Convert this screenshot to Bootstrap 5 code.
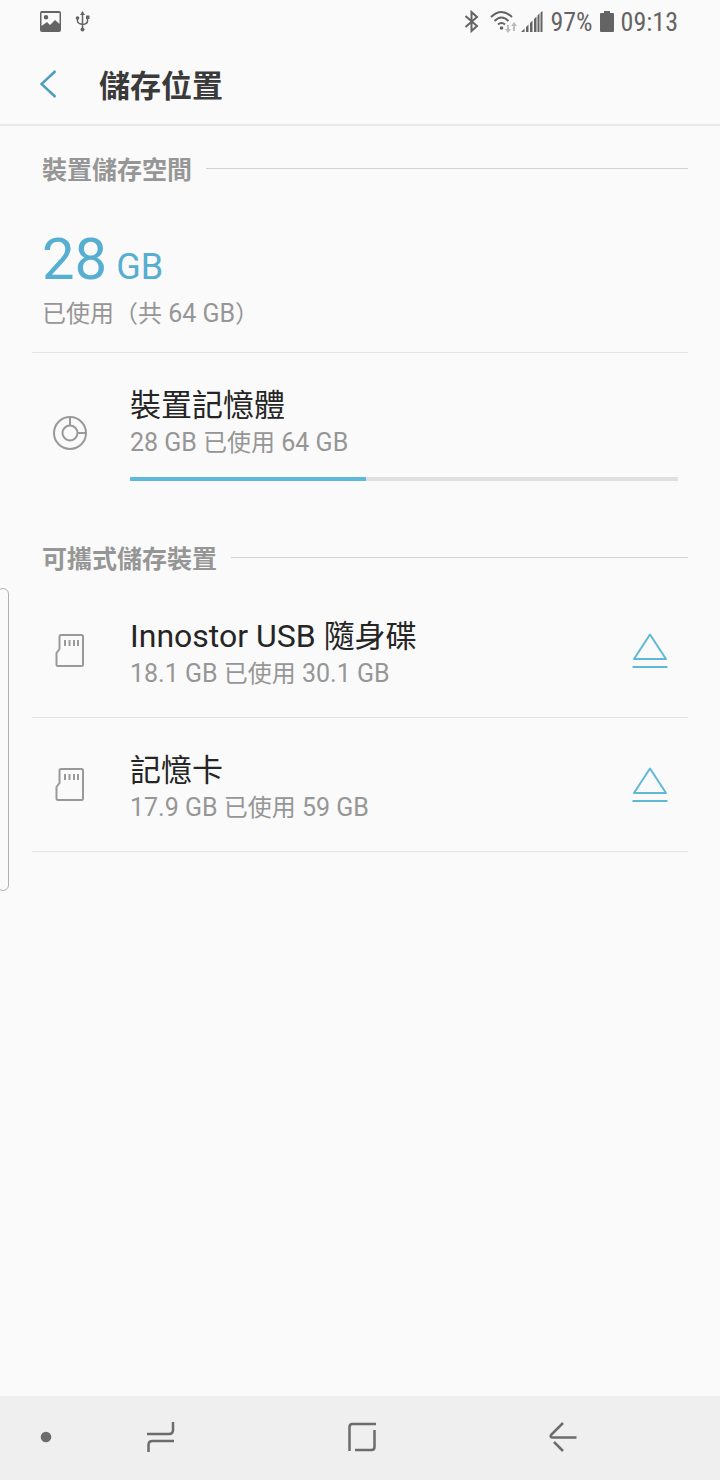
<!DOCTYPE html>
<html lang="zh-TW">
<head>
<meta charset="utf-8">
<meta name="viewport" content="width=device-width, initial-scale=1">
<title>儲存位置</title>
<link href="https://cdn.jsdelivr.net/npm/bootstrap@5.3.0/dist/css/bootstrap.min.css" rel="stylesheet">
<style>
  body { background: #fafafa; color: #252525; font-family: Roboto, "Noto Sans CJK TC", sans-serif; }
  svg { display: block; flex: none; }
  .icon-stroke { fill: none; stroke: currentColor; stroke-width: 2; }
  .icon-heavy { stroke-width: 2.500; }
  .status-bar { height: 43px; padding: 0 42px 0 40px; color: #646464; font: 26px/42px "Roboto Condensed", "Liberation Sans Narrow", Roboto, sans-serif; }
  .status-left { gap: 14px; }
  .status-right { gap: 7px; }
  .signal-group { gap: 4px; }
  .app-header { height: 83px; padding: 0 40px; border-bottom: 2px solid #e8e8e8; }
  .app-header h1 { font-size: 31px; line-height: 40px; padding-top: 6px; color: #3a3a3a; }
  .back-btn { color: #4b9fbe; width: 59px; }
  .storage-area { padding: 27px 32px 0; }
  .section-title { padding-left: 10px; gap: 14px; }
  .section-title h2 { font-size: 25px; line-height: 36px; color: #969696; }
  .section-title .rule { height: 1px; margin-top: 15px; background: #d2d2d2; }
  .usage { padding: 37px 10px 20px; color: #56aed0; border-bottom: 1px solid #e4e4e4; }
  .usage-total { font-size: 58px; line-height: 67px; margin-bottom: 3px; }
  .usage-total small { font-size: 36px; line-height: 1; }
  .sub-text { font-size: 25px; line-height: 36px; color: #969696; }
  .sub-text span { font-size: 24px; line-height: 1; }
  .storage-item { padding: 25px 20px; gap: 42px; border-bottom: 1px solid #e4e4e4; color: #999; }
  .storage-item .details { padding-top: 8px; }
  .storage-item.internal { padding: 25px 10px 31px 20px; border: 0; }
  .storage-item.internal svg { margin-top: 6px; }
  .storage-item h3 { font-size: 32px; line-height: 39px; color: #252525; }
  .storage-item h3 span { font-size: 31px; line-height: 1; }
  .storage-bar { height: 4px; margin-top: 16px; background: #e0e0e0; --bs-progress-bar-bg: #5fb9dc; }
  .portable { margin-top: 30px; }
  .portable .storage-list { margin-top: 6px; }
  .eject-btn { color: #5fb9d6; }
  .edge-handle { left: -3px; top: 588px; width: 12px; height: 303px; border: 1px solid #b0b0b0; border-radius: 8px; }
  .nav-bar { height: 84px; background: #efefef; color: #6c6c6c; padding: 0 57px 2px 0; }
  .nav-dot { width: 60px; }
  .nav-dot svg { margin-left: 32px; }
</style>
</head>
<body>
<div class="d-flex flex-column min-vh-100 position-relative">
  <div class="status-bar d-flex align-items-center justify-content-between">
    <div class="status-left d-flex align-items-center">
      <svg width="21" height="21" viewBox="0 0 21 21" role="img" aria-label="圖片"><path fill="currentColor" fill-rule="evenodd" d="M2 0h17q2 0 2 2v17q0 2-2 2H2q-2 0-2-2V2Q0 0 2 0ZM1.500 2v13L7 11l3 3 5-5 4.500 4V2ZM6 4a2 2 0 1 1 0 4.500a2 2 0 1 1 0-4.500Z"/></svg>
      <svg width="16" height="21" viewBox="0 0 16 21" role="img" aria-label="USB"><path class="icon-stroke" style="stroke-width:1.500" d="M7.500 2v17M2.500 7v3q0 2.500 5 3.500q5-.5 5-3.500V6"/><path fill="currentColor" d="M7.500 0 10 4H5ZM11 4.500h3.500V8H11Z"/><circle cx="2.500" cy="7" r="1.800" fill="currentColor"/><circle cx="7.500" cy="18.500" r="2" fill="currentColor"/></svg>
    </div>
    <div class="status-right d-flex align-items-center">
      <svg class="me-1" width="15" height="23" viewBox="0 0 15 23" role="img" aria-label="藍牙"><path class="icon-stroke" d="M1.500 6 13 16l-5.500 5V2L13 7 1.500 17"/></svg>
      <div class="signal-group d-flex align-items-center">
        <svg width="27" height="24" viewBox="0 0 27 24" role="img" aria-label="Wi-Fi"><path class="icon-stroke" d="M1 7q10.500-10 21 0M4.500 11q7-7 14 0M8 14.500q3.500-3 7 0"/><circle cx="11.500" cy="18" r="1.800" fill="currentColor"/><path fill="#bdbdbd" d="M17 15h2v4h2l-3 4-3-4h2ZM24 12l3 4h-2v5h-2v-5h-2Z"/></svg>
        <svg width="22" height="22" viewBox="0 0 22 22" role="img" aria-label="訊號"><path fill="currentColor" d="M0 21l3.500-3.500V21ZM5 16l2.500-2.500V21H5ZM9 12l2.500-2.500V21H9ZM13 8l2.500-2.500V21H13ZM16.500 4.500 18.500 2.500V21h-2ZM19.500 1.500 21.500 0v21h-2Z"/></svg>
      </div>
      <span>97%</span>
      <svg width="14" height="21" viewBox="0 0 14 21" role="img" aria-label="電池"><path fill="currentColor" d="M4 0h6v2h3q1 0 1 1v17q0 1-1 1H1q-1 0-1-1V3q0-1 1-1h3Z"/></svg>
      <span>09:13</span>
    </div>
  </div>

  <header class="app-header d-flex align-items-center">
    <button type="button" class="back-btn btn border-0 p-0" aria-label="返回"><svg width="17" height="28" viewBox="0 0 17 28"><path class="icon-stroke icon-heavy" d="M15.500 1 1.500 14l14 13"/></svg></button>
    <h1 class="fw-bold m-0">儲存位置</h1>
  </header>

  <main class="storage-area flex-grow-1">
    <section>
      <div class="section-title d-flex align-items-start"><h2 class="fw-bold m-0">裝置儲存空間</h2><div class="rule flex-grow-1"></div></div>
      <div class="usage">
        <div class="usage-total">28<small> GB</small></div>
        <div class="sub-text"><span>已使用（共</span> 64 GB<span>）</span></div>
      </div>
      <div class="storage-item internal d-flex align-items-center">
        <svg width="36" height="36" viewBox="0 0 36 36"><g class="icon-stroke"><circle cx="18" cy="18" r="16"/><circle cx="18" cy="18" r="7.500"/><path d="M18 2v8.500M25.500 18H34"/></g></svg>
        <div class="details flex-grow-1">
          <h3 class="fw-normal m-0"><span>裝置記憶體</span></h3>
          <div class="sub-text">28 GB <span>已使用</span> 64 GB</div>
          <div class="storage-bar progress rounded-0" role="progressbar" aria-label="裝置記憶體" aria-valuenow="43" aria-valuemin="0" aria-valuemax="100"><div class="progress-bar" style="width:43%"></div></div>
        </div>
      </div>
    </section>

    <section class="portable">
      <div class="section-title d-flex align-items-start"><h2 class="fw-bold m-0">可攜式儲存裝置</h2><div class="rule flex-grow-1"></div></div>
      <div class="storage-list">
        <div class="storage-item d-flex align-items-center">
          <svg width="36" height="36" viewBox="0 0 36 36"><path class="icon-stroke" d="M9 2h20.500q1.500 0 1.500 1.500v28q0 1.500-1.500 1.500H6q-1.500 0-1.500-1.500V20l3-4V3.500Q7.500 2 9 2ZM13 7v6M17.500 7v6M22 7v6M26 7v6"/></svg>
          <div class="details flex-grow-1"><h3 class="fw-normal m-0">Innostor USB <span>隨身碟</span></h3><div class="sub-text">18.1 GB <span>已使用</span> 30.1 GB</div></div>
          <button type="button" class="eject-btn btn border-0 p-0" aria-label="卸載 Innostor USB 隨身碟"><svg width="36" height="36" viewBox="0 0 36 36"><path class="icon-stroke" stroke-linejoin="round" d="M18 1.500 34 26H2ZM.5 34h35"/></svg></button>
        </div>
        <div class="storage-item d-flex align-items-center">
          <svg width="36" height="36" viewBox="0 0 36 36"><path class="icon-stroke" d="M9 2h20.500q1.500 0 1.500 1.500v28q0 1.500-1.500 1.500H6q-1.500 0-1.500-1.500V20l3-4V3.500Q7.500 2 9 2ZM13 7v6M17.500 7v6M22 7v6M26 7v6"/></svg>
          <div class="details flex-grow-1"><h3 class="fw-normal m-0"><span>記憶卡</span></h3><div class="sub-text">17.9 GB <span>已使用</span> 59 GB</div></div>
          <button type="button" class="eject-btn btn border-0 p-0" aria-label="卸載記憶卡"><svg width="36" height="36" viewBox="0 0 36 36"><path class="icon-stroke" stroke-linejoin="round" d="M18 1.500 34 26H2ZM.5 34h35"/></svg></button>
        </div>
      </div>
    </section>
  </main>

  <nav class="nav-bar d-flex align-items-center" aria-label="導覽列">
    <button type="button" class="nav-dot btn border-0 p-0 text-reset d-flex justify-content-center" aria-label="隱藏導覽列"><svg width="12" height="12" viewBox="0 0 12 12"><circle cx="6" cy="6" r="5.300" fill="currentColor"/></svg></button>
    <div class="row g-0 flex-grow-1">
      <button type="button" class="col btn border-0 p-0 text-reset d-flex justify-content-center" aria-label="最近使用"><svg width="28" height="32" viewBox="0 0 28 32"><path class="icon-stroke icon-heavy" d="M0 13h22q4 0 4-4V1M1.500 31v-7q0-4 4-4H27"/></svg></button>
      <button type="button" class="col btn border-0 p-0 text-reset d-flex justify-content-center align-items-center" aria-label="首頁"><svg width="28" height="30" viewBox="0 0 28 30"><path class="icon-stroke icon-heavy" d="M1.500 29V5q0-3 3-3H28M26.500 8v17q0 3-3 3H7"/></svg></button>
      <button type="button" class="col btn border-0 p-0 text-reset d-flex justify-content-center" aria-label="返回上一頁"><svg width="28" height="32" viewBox="0 0 28 32"><path class="icon-stroke icon-heavy" stroke-linejoin="round" d="M14 2 2 14q-1 2.500 1 2.500h24.500M5 21l9 9"/></svg></button>
    </div>
  </nav>
  <div class="edge-handle position-absolute" aria-hidden="true"></div>
</div>
<script src="https://cdn.jsdelivr.net/npm/bootstrap@5.3.0/dist/js/bootstrap.bundle.min.js"></script>
</body>
</html>
